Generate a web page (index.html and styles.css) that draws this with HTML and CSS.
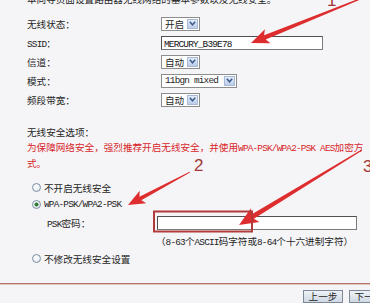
FILE: index.html
```html
<!DOCTYPE html>
<html lang="zh-CN">

<head>
    <meta charset="UTF-8">
    <meta name="viewport" content="width=device-width, initial-scale=1.0">
    <title>无线设置</title>
    <link rel="stylesheet" href="styles.css">
</head>

<body>
    <div class="page">
        <p class="intro">本向导页面设置路由器无线网络的基本参数以及无线安全。</p>

        <div class="settings">
            <span class="label">无线状态：</span>
            <span class="select w-short"><span class="value">开启</span><span class="drop"><svg width="7" height="5" viewBox="0 0 7 5"><path d="M0.8 0.8 L3.5 3.8 L6.2 0.8" fill="none" stroke="#3d5a8c" stroke-width="1.5"/></svg></span></span>

            <span class="label"><span class="en">SSID</span>：</span>
            <span class="field w-ssid"><span class="en">MERCURY_B39E78</span></span>

            <span class="label">信道：</span>
            <span class="select w-short"><span class="value">自动</span><span class="drop"><svg width="7" height="5" viewBox="0 0 7 5"><path d="M0.8 0.8 L3.5 3.8 L6.2 0.8" fill="none" stroke="#3d5a8c" stroke-width="1.5"/></svg></span></span>

            <span class="label">模式：</span>
            <span class="select w-mode"><span class="value en">11bgn mixed</span><span class="drop"><svg width="7" height="5" viewBox="0 0 7 5"><path d="M0.8 0.8 L3.5 3.8 L6.2 0.8" fill="none" stroke="#3d5a8c" stroke-width="1.5"/></svg></span></span>

            <span class="label">频段带宽：</span>
            <span class="select w-short"><span class="value">自动</span><span class="drop"><svg width="7" height="5" viewBox="0 0 7 5"><path d="M0.8 0.8 L3.5 3.8 L6.2 0.8" fill="none" stroke="#3d5a8c" stroke-width="1.5"/></svg></span></span>
        </div>

        <p class="sec-title">无线安全选项：</p>
        <p class="warn">为保障网络安全，强烈推荐开启无线安全，并使用<span class="en">WPA-PSK/WPA2-PSK AES</span>加密方<br>式。</p>

        <div class="radio-row first">
            <span class="radio"></span>
            <span>不开启无线安全</span>
        </div>
        <div class="radio-row">
            <span class="radio on"></span>
            <span class="en">WPA-PSK/WPA2-PSK</span>
        </div>
        <div class="psk-row">
            <span class="label"><span class="en">PSK</span>密码：</span>
            <span class="field w-psk"></span>
        </div>
        <p class="hint">（<span class="en">8-63</span>个<span class="en">ASCII</span>码字符或<span class="en">8-64</span>个十六进制字符）</p>
        <div class="radio-row last">
            <span class="radio"></span>
            <span>不修改无线安全设置</span>
        </div>
    </div>

    <div class="divider"></div>

    <div class="buttons">
        <span class="btn">上一步</span>
        <span class="btn">下一步</span>
    </div>

    <!-- annotation marks drawn over the screenshot -->
    <svg class="marks" width="370" height="303" viewBox="0 0 370 303">
        <g fill="#dd2d2f">
            <g transform="translate(251 43) rotate(-22)">
                <polygon points="0,0 18,-7.5 15,-2.2 131,-0.5 131,0.5 15,2.2 18,7.5"/>
            </g>
            <g transform="translate(128 205) rotate(-28)">
                <polygon points="0,0 17,-7 14,-2 70,-0.5 70,0.5 14,2 17,7"/>
            </g>
            <g transform="translate(239 225) rotate(-31.4)">
                <polygon points="0,0 19,-8 16,-2.4 144,-0.5 144,0.5 16,2.4 19,8"/>
            </g>
        </g>
        <rect x="154" y="211.5" width="98" height="20" fill="none" stroke="#b33a3a" stroke-width="2"/>
        <g class="num">
            <text x="327" y="6">1</text>
            <text x="194" y="171">2</text>
            <text x="363" y="172">3</text>
        </g>
    </svg>
</body>

</html>
```

FILE: styles.css
```css
html,
body {
    margin: 0;
    overflow: hidden;
}

body {
    position: relative;
    width: 370px;
    height: 303px;
    background: #f5f5f7;
    font-family: "Noto Sans CJK SC", "Noto Sans", sans-serif;
    font-size: 9.6px;
    color: #1e1e1e;
}

p {
    margin: 0;
}

.en {
    font-family: "Liberation Mono", monospace;
    font-size: 9.4px;
    letter-spacing: -0.8px;
}

.page {
    padding-left: 27px;
}

.intro {
    margin-top: -7px;
    line-height: 12px;
    white-space: nowrap;
}

.settings {
    display: grid;
    grid-template-columns: 134px 1fr;
    grid-auto-rows: 19px;
    align-items: center;
    justify-items: start;
    margin-top: 9px;
}

.select {
    display: flex;
    align-items: center;
    height: 14px;
    box-sizing: border-box;
    border: 1px solid #8d8d8d;
    background: #fff;
}

.w-short {
    width: 39px;
}

.w-mode {
    width: 76px;
}

.select .value {
    flex: 1;
    padding-left: 3px;
    line-height: 12px;
    white-space: nowrap;
}

.drop {
    display: flex;
    align-items: center;
    justify-content: center;
    width: 11px;
    height: 10px;
    margin-right: 1px;
    box-sizing: border-box;
    border: 1px solid #a7b9d6;
    background: linear-gradient(#e4ecf8, #bccde9);
}

.field {
    display: block;
    height: 14px;
    box-sizing: border-box;
    border: 1px solid #7a7a7a;
    border-top-color: #505050;
    border-left-color: #505050;
    background: #fff;
    padding-left: 2px;
    line-height: 12px;
    color: #111;
}

.w-ssid {
    width: 162px;
}

.w-psk {
    width: 200px;
}

.sec-title {
    margin-top: 17px;
    line-height: 12px;
}

.warn {
    margin-top: 2px;
    line-height: 15px;
    color: #d8262a;
    white-space: nowrap;
}

.radio-row {
    display: flex;
    align-items: center;
    height: 17px;
}

.radio-row.first {
    margin-top: 8px;
}

.radio {
    width: 9px;
    height: 9px;
    margin: 0 3px 0 5px;
    box-sizing: border-box;
    border: 1px solid #7e8fa2;
    border-radius: 50%;
    background: radial-gradient(circle at 40% 35%, #ffffff, #dce2ea);
}

.radio.on {
    background: radial-gradient(circle, #2f7a34 0 1.8px, transparent 2.3px),
        radial-gradient(circle at 40% 35%, #ffffff, #dce2ea);
}

.psk-row {
    display: flex;
    align-items: center;
    height: 20px;
    padding-left: 20px;
}

.psk-row .label {
    width: 110px;
}

.hint {
    margin-top: 1px;
    padding-left: 129px;
    line-height: 14px;
    white-space: nowrap;
}

.divider {
    margin-top: 16px;
    height: 1px;
    border-top: 1px solid #b8766e;
    background: #e2c4bf;
}

.buttons {
    display: flex;
    gap: 6px;
    margin-top: 5px;
    padding-left: 303px;
}

.btn {
    flex: none;
    display: flex;
    align-items: center;
    justify-content: center;
    width: 40px;
    height: 13px;
    box-sizing: border-box;
    border: 1px solid #7c8898;
    background: linear-gradient(#eef2f7, #cfd8e4);
    line-height: 11px;
}

.marks {
    position: absolute;
    top: 0;
    left: 0;
    pointer-events: none;
}

.marks .num {
    font-family: "Liberation Sans", sans-serif;
    font-size: 17px;
    fill: #a23838;
}
```
